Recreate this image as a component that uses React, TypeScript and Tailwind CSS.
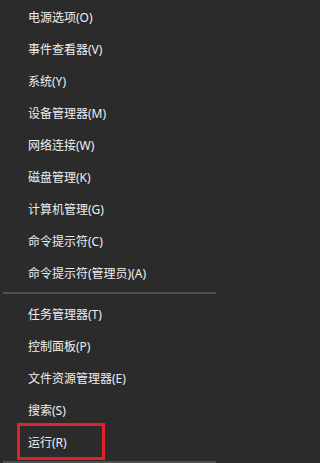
const topItems = [
  "电源选项(O)",
  "事件查看器(V)",
  "系统(Y)",
  "设备管理器(M)",
  "网络连接(W)",
  "磁盘管理(K)",
  "计算机管理(G)",
  "命令提示符(C)",
  "命令提示符(管理员)(A)",
];

const bottomItems = ["任务管理器(T)", "控制面板(P)", "文件资源管理器(E)", "搜索(S)", "运行(R)"];

const MenuItem = ({ label, highlight }: { label: string; highlight?: boolean }) => (
  <div className="relative flex h-[32px] items-center pl-[28px]">
    <span className="text-[12px] leading-none text-[#efefef]">{label}</span>
    {highlight && (
      <div className="absolute left-[17px] top-[-4px] h-[37px] w-[88px] border-[3px] border-[#e0222c]" />
    )}
  </div>
);

export default function App() {
  return (
    <div className="min-h-screen w-full bg-[#2b2b2b]">
      <div
        className="h-[463px] w-[224px] overflow-hidden bg-[#2b2b2b] pt-[2px]"
        style={{ fontFamily: '"Noto Sans", "Noto Sans CJK SC", sans-serif' }}
      >
        {topItems.map((t) => (
          <MenuItem key={t} label={t} />
        ))}
        <div className="mx-[3px] mt-[2px] mb-[5px] h-[2px] w-[213px] bg-[#4f4f4f]" />
        {bottomItems.map((t) => (
          <MenuItem key={t} label={t} highlight={t === "运行(R)"} />
        ))}
        <div className="mx-[3px] mt-[2px] h-[2px] w-[213px] bg-[#4f4f4f]" />
      </div>
    </div>
  );
}
